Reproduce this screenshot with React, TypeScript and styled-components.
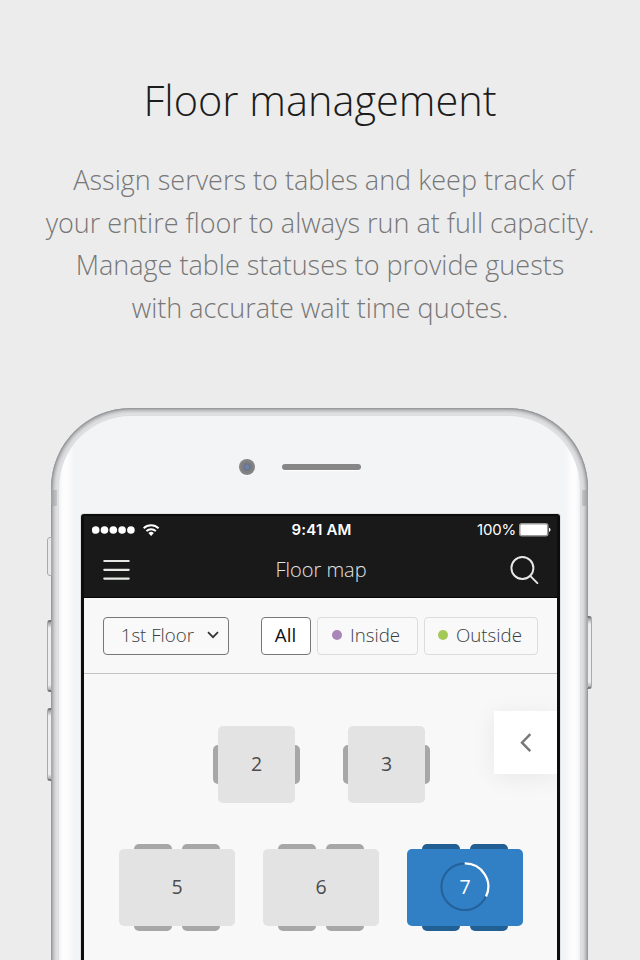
import React from "react";
import styled, { createGlobalStyle, css } from "styled-components";

const GlobalStyle = createGlobalStyle`
  * { box-sizing: border-box; }
  body { margin: 0; background: #ececec; font-family: "Open Sans", sans-serif; font-weight: 300; }
`;

const Page = styled.main`
  width: 640px;
  height: 960px;
  overflow: hidden;
  background: #ececec;
  display: flex;
  flex-direction: column;
`;

const Intro = styled.header`
  height: 408px;
  flex: none;
  padding-top: 70px;
  text-align: center;
`;

const Title = styled.h1`
  margin: 0;
  font-size: 41.5px;
  line-height: 60px;
  font-weight: 300;
  color: #1c1c1c;
`;

const Description = styled.p`
  margin: 29px 0 0;
  font-size: 27px;
  line-height: 42.7px;
  color: #777;
  white-space: nowrap;
`;

const Line = styled.span<{ $indent?: number }>`
  display: block;
  padding-left: ${(p) => p.$indent ?? 0}px;
`;

const Phone = styled.section`
  position: relative;
  width: 537px;
  height: 552px;
  flex: none;
  margin-left: 51px;
`;

const Shell = styled.div`
  height: 700px;
  padding: 8px 8px 0;
  border-radius: 80px;
  background: #e4e5e7;
  box-shadow: inset 0 0 0 1px #98999b, inset 0 0 3px 2px #9fa0a2, inset 0 0 6px 3px #c0c1c4;
`;

const Face = styled.div`
  height: 692px;
  padding: 98px 22px 0;
  border-radius: 72px;
  background: linear-gradient(90deg, #f1f2f5 0, #fdfdfe 4px, #fdfdfe 8px, #f3f4f6 15px, #f3f4f6 506px, #fdfdfe 513px, #fdfdfe 517px, #eff0f2 521px);
  box-shadow: 0 0 0 1px #dcdddf;
`;

const SideButton = styled.i<{ $side: "left" | "right"; $top: number; $height: number }>`
  position: absolute;
  ${(p) => p.$side}: -4px;
  top: ${(p) => p.$top}px;
  width: 5px;
  height: ${(p) => p.$height}px;
  border: 1px solid #aaa;
  border-top: 2px solid #777;
  border-bottom: 2px solid #777;
  border-radius: ${(p) => (p.$side === "left" ? "3px 0 0 3px" : "0 3px 3px 0")};
  background: linear-gradient(#999, #eee 6px, #ededed calc(100% - 5px), #aaa);
`;

const MuteSwitch = styled(SideButton)`
  border: 1px solid #aaa;
  background: #e9e9e9;
`;

const Antenna = styled.i<{ $side: "left" | "right" }>`
  position: absolute;
  ${(p) => p.$side}: 0;
  top: 82px;
  width: 6px;
  height: 16px;
  background: linear-gradient(${(p) => (p.$side === "left" ? "90deg" : "270deg")}, #9c9d9f, #c6c7ca);
`;

const Sensors = styled.div`
  position: absolute;
  top: 51px;
  left: 188px;
  display: flex;
  align-items: center;
  gap: 27px;
`;

const Camera = styled.i`
  width: 16px;
  height: 16px;
  border-radius: 50%;
  background: radial-gradient(circle, #6c80ab 0 1.5px, #6c7488 3px, #7d7d7f 4.5px, #858585 7px);
  box-shadow: 0 1px 0 #fff;
`;

const Speaker = styled.i`
  width: 79px;
  height: 6px;
  border-radius: 3px;
  background: #868686;
  box-shadow: 0 1px 0 #fff;
`;

const Screen = styled.div`
  width: 479px;
  height: 460px;
  border: 3px solid #0c0d0d;
  border-top-width: 0;
  border-bottom: 0;
  border-radius: 3px 3px 0 0;
  background: #f8f8f8;
  box-shadow: 0 0 0 1px #dfe0e2;
  overflow: hidden;
`;

const AppHeader = styled.div`
  height: 84px;
  margin: 0 -3px;
  padding: 0 3px;
  background: #191919;
  border-top: 2px solid #0c0c0c;
  border-bottom: 1px solid #050505;
`;

const StatusBar = styled.div`
  display: grid;
  grid-template-columns: 1fr auto 1fr;
  align-items: center;
  height: 28px;
  padding: 0 6px 0 8px;
  font-family: Inter, sans-serif;
  color: #fff;
  font-size: 15px;
  line-height: 20px;
`;

const StatusGroup = styled.div<{ $end?: boolean }>`
  display: flex;
  align-items: center;
  gap: ${(p) => (p.$end ? 3 : 8)}px;
  justify-content: ${(p) => (p.$end ? "flex-end" : "flex-start")};
  font-weight: 400;
`;

const BatteryLevel = styled.span`
  letter-spacing: -0.2px;
`;

const Clock = styled.time`
  font-weight: 600;
  letter-spacing: 0.2px;
`;

const NavBar = styled.div`
  display: grid;
  grid-template-columns: 60px 1fr 60px;
  align-items: center;
  height: 52px;
  padding: 0 18px 0 19px;
`;

const NavTitle = styled.h2`
  margin: 0;
  text-align: center;
  font-size: 20px;
  font-weight: 300;
  line-height: 28px;
  color: #e4e4e4;
`;

const IconButton = styled.button<{ $end?: boolean }>`
  display: flex;
  justify-content: ${(p) => (p.$end ? "flex-end" : "flex-start")};
  padding: 0;
  border: 0;
  background: none;
`;

const Filters = styled.div`
  display: flex;
  height: 76px;
  padding: 18.5px 0 0 19px;
  border-bottom: 1px solid #c4c4c4;
`;

const Chip = styled.button<{ $width: number; $strong?: boolean; $selected?: boolean; $gap?: number; $inner?: number }>`
  display: flex;
  align-items: center;
  justify-content: center;
  width: ${(p) => p.$width}px;
  height: 38px;
  flex: none;
  margin-left: ${(p) => p.$gap ?? 0}px;
  padding: 0 0 2px;
  gap: ${(p) => p.$inner ?? 8}px;
  font: ${(p) => (p.$selected ? 400 : 300)} 18.7px/26px "Open Sans", sans-serif;
  color: ${(p) => (p.$selected ? "#111" : "#3a3d3d")};
  background: ${(p) => (p.$selected ? "#fff" : "#f9f9f9")};
  border: ${(p) => (p.$strong ? "1.5px solid #777" : "1.5px solid #dcdcdc")};
  border-radius: 4px;
`;

const FloorSelect = styled(Chip)`
  justify-content: flex-end;
  padding-right: 9px;
`;

const AreaChip = styled(Chip)`
  padding-right: 2px;
`;

const Dot = styled.i<{ $color: string }>`
  width: 10px;
  height: 10px;
  margin-top: 1px;
  border-radius: 50%;
  background: ${(p) => p.$color};
`;

const FloorMap = styled.div`
  position: relative;
  height: 290px;
  padding-top: 52px;
`;

const TableRow = styled.div<{ $left: number; $gap: number; $top?: number }>`
  display: flex;
  gap: ${(p) => p.$gap}px;
  margin: ${(p) => p.$top ?? 0}px 0 0 ${(p) => p.$left}px;
`;

const TableUnit = styled.div<{ $long?: boolean }>`
  display: flex;
  flex-direction: ${(p) => (p.$long ? "column" : "row")};
  align-items: center;
`;

const Seats = styled.div`
  display: flex;
  gap: 9.5px;
`;

const Seat = styled.i<{ $edge: "top" | "bottom" | "left" | "right"; $active?: boolean }>`
  display: block;
  background: ${(p) => (p.$active ? "#225f93" : "#a7a7a7")};
  ${(p) =>
    p.$edge === "top" || p.$edge === "bottom"
      ? css`width: 38.5px; height: 5px;`
      : css`width: 5px; height: 39px;`}
  border-radius: ${(p) =>
    ({ top: "5px 5px 0 0", bottom: "0 0 5px 5px", left: "5px 0 0 5px", right: "0 5px 5px 0" })[p.$edge]};
`;

const Table = styled.div<{ $long?: boolean; $active?: boolean }>`
  display: grid;
  place-items: center;
  width: ${(p) => (p.$long ? 116 : 77)}px;
  height: 77px;
  padding-bottom: 2px;
  border-radius: 5px;
  background: ${(p) => (p.$active ? "#317fc4" : "#e3e3e3")};
  color: ${(p) => (p.$active ? "#fff" : "#4c4c4c")};
  font-size: 19.5px;
  font-weight: 400;
  line-height: 28px;

  > * { grid-area: 1 / 1; }
`;

const Drawer = styled.button`
  position: absolute;
  top: 37px;
  right: 0;
  width: 63px;
  height: 63px;
  display: grid;
  place-items: center;
  padding: 0;
  border: 0;
  background: #fff;
  box-shadow: 0 3px 24px rgba(0, 0, 0, 0.07);
`;

function SmallTable({ name }: { name: string }) {
  return (
    <TableUnit>
      <Seat $edge="left" />
      <Table><span>{name}</span></Table>
      <Seat $edge="right" />
    </TableUnit>
  );
}

function LongTable({ name, active }: { name: string; active?: boolean }) {
  return (
    <TableUnit $long>
      <Seats><Seat $edge="top" $active={active} /><Seat $edge="top" $active={active} /></Seats>
      <Table $long $active={active}>
        {active && (
          <svg width="50" height="50" viewBox="0 0 50 50" fill="none">
            <circle cx="24.7" cy="24.7" r="23.3" stroke="#24619a" strokeWidth="2" />
            <path d="M24.7 1.4A23.3 23.3 0 0 1 46 34.6" stroke="#fff" strokeWidth="2.3" />
          </svg>
        )}
        <span>{name}</span>
      </Table>
      <Seats><Seat $edge="bottom" $active={active} /><Seat $edge="bottom" $active={active} /></Seats>
    </TableUnit>
  );
}

export default function App() {
  return (
    <Page>
      <GlobalStyle />
      <Intro>
        <Title>Floor management</Title>
        <Description>
          <Line $indent={8}>Assign servers to tables and keep track of</Line>
          <Line>your entire floor to always run at full capacity.</Line>
          <Line>Manage table statuses to provide guests</Line>
          <Line>with accurate wait time quotes.</Line>
        </Description>
      </Intro>
      <Phone>
        <MuteSwitch $side="left" $top={129} $height={39} />
        <SideButton $side="left" $top={212} $height={72} />
        <SideButton $side="left" $top={300} $height={73} />
        <SideButton $side="right" $top={208} $height={73} />
        <Shell>
          <Face>
            <Screen>
              <AppHeader>
                <StatusBar>
                  <StatusGroup>
                    <svg width="43" height="8" viewBox="0 0 43 8" fill="#fff">
                      {[3.7, 12.5, 21.3, 30.1, 38.9].map((x) => <circle key={x} cx={x} cy="4" r="3.8" />)}
                    </svg>
                    <svg width="17" height="13" viewBox="0 0 17 13" fill="none" stroke="#fff" strokeWidth="2">
                      <path d="M.6 4.2a10.7 10.7 0 0 1 15 0M3.4 7.1a6.7 6.7 0 0 1 9.4 0" />
                      <path d="M5.4 9.1a3.8 3.8 0 0 1 5.4 0L8.1 11.9z" fill="#fff" stroke="none" />
                    </svg>
                  </StatusGroup>
                  <Clock>9:41 AM</Clock>
                  <StatusGroup $end>
                    <BatteryLevel>100%</BatteryLevel>
                    <svg width="32" height="14" viewBox="0 0 32 14">
                      <rect x=".75" y=".75" width="28" height="12" rx="2" fill="#fff" stroke="#999" strokeWidth="1.5" />
                      <path d="M30 4.7c2 .6 2 3.5 0 4.1z" fill="#fff" />
                    </svg>
                  </StatusGroup>
                </StatusBar>
                <NavBar>
                  <IconButton aria-label="Menu">
                    <svg width="27" height="22" viewBox="0 0 27 22" stroke="#e6e9e3" strokeWidth="2.2" strokeLinecap="round">
                      <path d="M1.3 2h24.4M1.3 10.8h24.4M1.3 19.6h24.4" />
                    </svg>
                  </IconButton>
                  <NavTitle>Floor map</NavTitle>
                  <IconButton $end aria-label="Search">
                    <svg width="30" height="30" viewBox="0 0 30 30" fill="none" stroke="#e8e8e8" strokeWidth="1.9" strokeLinecap="round">
                      <circle cx="13.4" cy="13" r="11" /><path d="m21.2 20.9 7.2 7.2" />
                    </svg>
                  </IconButton>
                </NavBar>
              </AppHeader>
              <Filters>
                <FloorSelect $width={126} $strong $inner={13}>
                  <span>1st Floor</span>
                  <svg width="12" height="8" viewBox="0 0 12 8" fill="none" stroke="#333" strokeWidth="1.7"><path d="m1 1.2 5 5 5-5" /></svg>
                </FloorSelect>
                <Chip $width={50} $gap={31.5} $strong $selected>All</Chip>
                <AreaChip $width={101} $gap={6}><Dot $color="#a986b7" />Inside</AreaChip>
                <AreaChip $width={114} $gap={6.5}><Dot $color="#a5c957" />Outside</AreaChip>
              </Filters>
              <FloorMap>
                <TableRow $left={129} $gap={43}>
                  <SmallTable name="2" />
                  <SmallTable name="3" />
                </TableRow>
                <TableRow $left={35} $gap={28} $top={41}>
                  <LongTable name="5" />
                  <LongTable name="6" />
                  <LongTable name="7" active />
                </TableRow>
                <Drawer aria-label="Open panel">
                  <svg width="12" height="20" viewBox="0 0 12 20" fill="none" stroke="#777" strokeWidth="2.4"><path d="m10.3 1.2-8.3 8.5 8.3 8.5" /></svg>
                </Drawer>
              </FloorMap>
            </Screen>
          </Face>
        </Shell>
        <Antenna $side="left" />
        <Antenna $side="right" />
        <Sensors><Camera /><Speaker /></Sensors>
      </Phone>
    </Page>
  );
}
